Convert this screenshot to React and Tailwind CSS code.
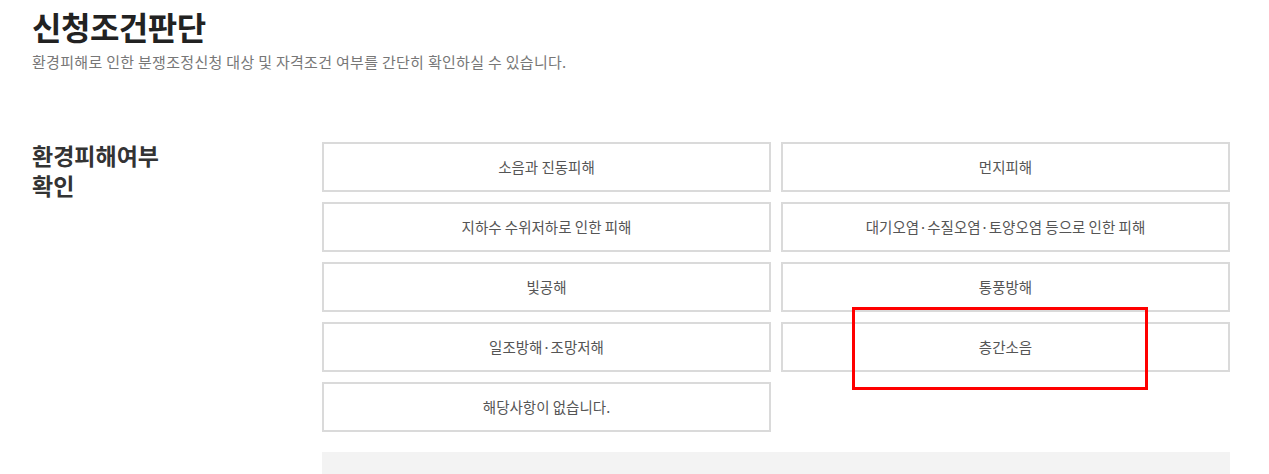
import React from 'react';

const items = [
    '소음과 진동피해',
    '먼지피해',
    '지하수 수위저하로 인한 피해',
    '대기오염·수질오염·토양오염 등으로 인한 피해',
    '빛공해',
    '통풍방해',
    '일조방해·조망저해',
    '층간소음',
    '해당사항이 없습니다.',
];

const font = { fontFamily: '"Noto Sans CJK KR", "Noto Sans", sans-serif' };

export default function App() {
    return (
        <div className="w-[1269px] h-[474px] overflow-hidden bg-white relative" style={font}>
            <div className="pl-[32px] pt-[6px]">
                <h1 className="text-[32px] leading-[40px] font-bold text-[#222] tracking-[-0.5px]">신청조건판단</h1>
                <p className="mt-[6px] text-[15px] leading-[20px] text-[#777] tracking-[0.3px]">
                    환경피해로 인한 분쟁조정신청 대상 및 자격조건 여부를 간단히 확인하실 수 있습니다.
                </p>
            </div>

            {/* 환경피해여부 */}
            <div className="flex pl-[32px] mt-[70px]">
                <h2 className="w-[290px] shrink-0 -mt-[2px] text-[23px] leading-[30px] font-semibold text-[#333]">
                    환경피해여부<br />확인
                </h2>
                <div className="w-[908px]">
                    <div className="grid grid-cols-2 gap-[10px]">
                        {items.map((label) => (
                            <button key={label}
                                className="h-[50px] border-2 border-[#dadada] bg-white text-[14.5px] text-[#555] flex items-center justify-center">
                                {label}
                            </button>
                        ))}
                    </div>
                    <div className="mt-[20px] h-[40px] bg-[#f3f3f3]" />
                </div>
            </div>

            {/* highlight overlay */}
            <div className="absolute left-[852px] top-[307px] w-[296px] h-[83px] border-[3px] border-[#ff0000]" />
        </div>
    );
}
